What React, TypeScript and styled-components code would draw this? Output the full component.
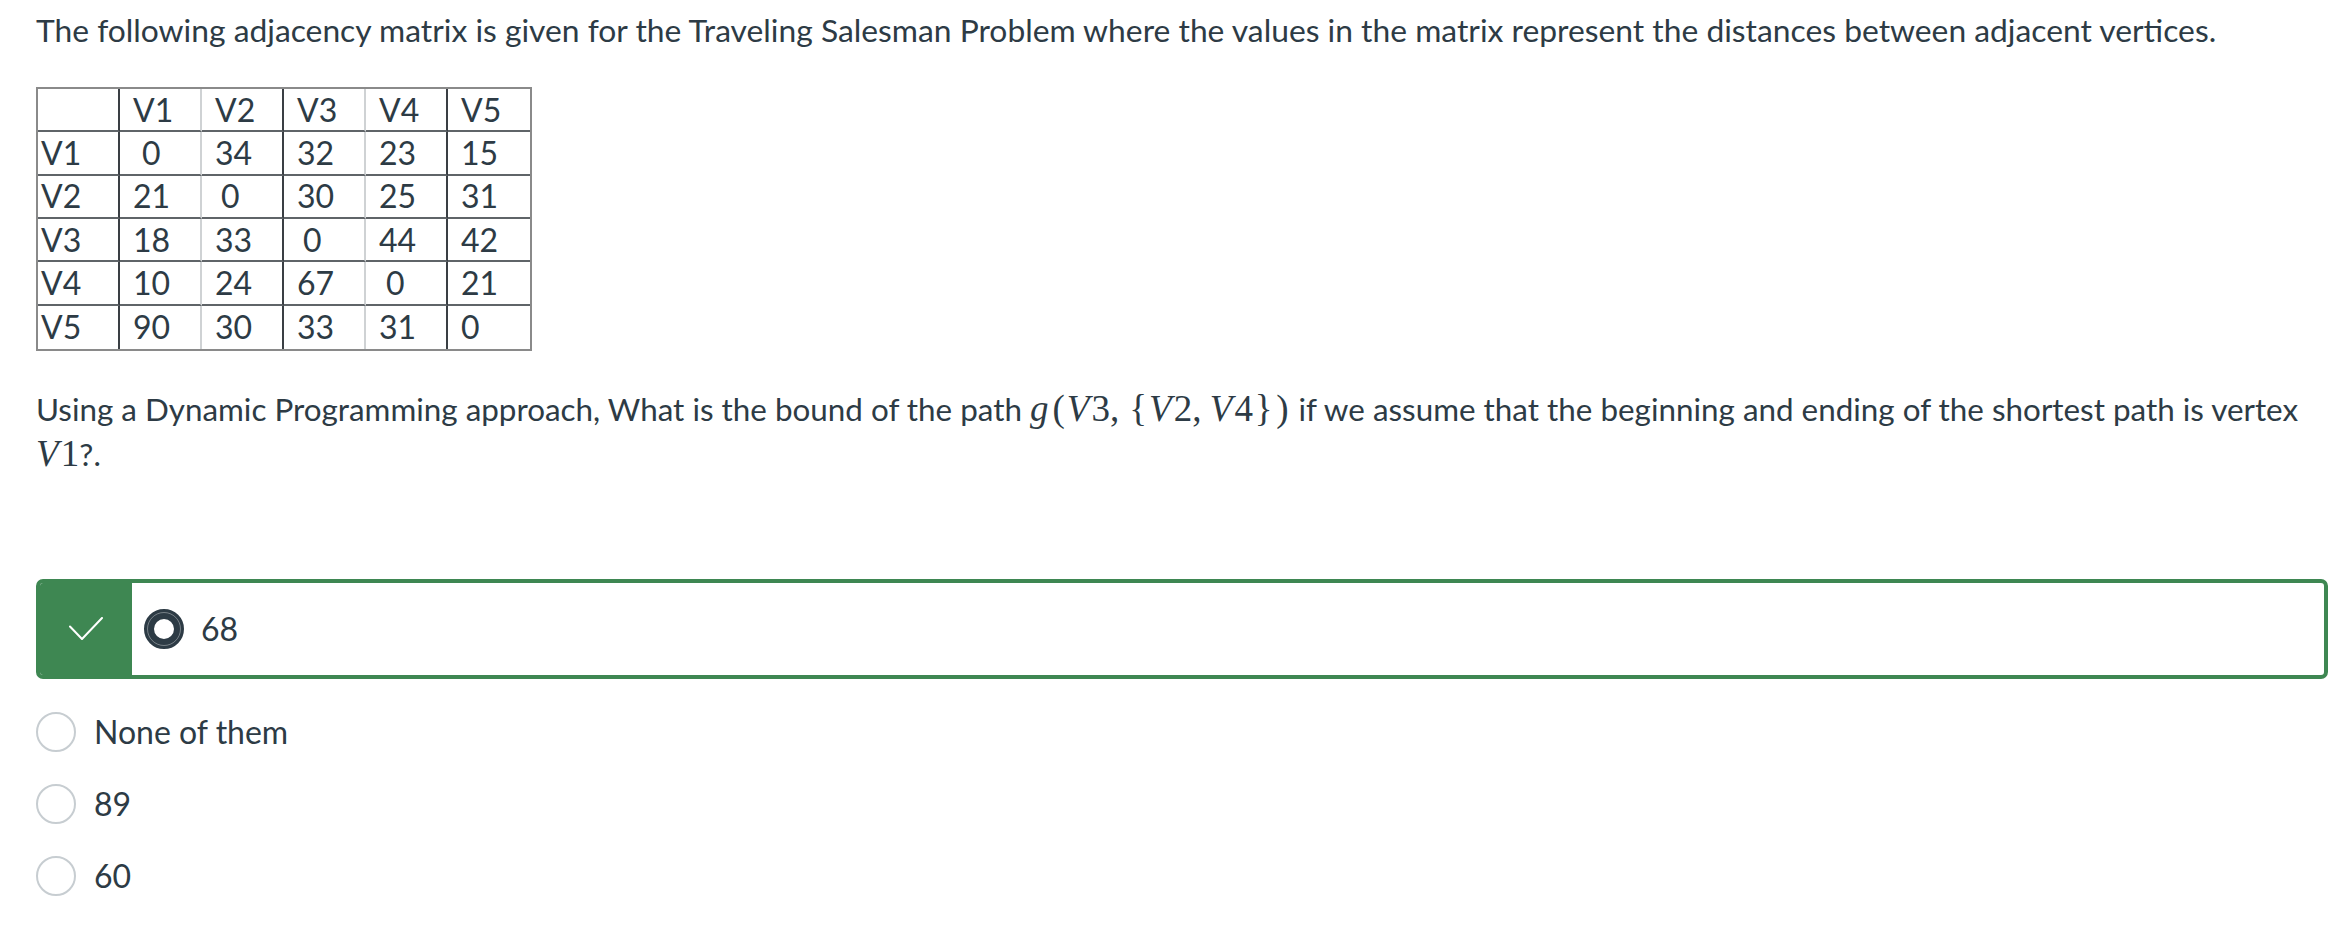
import React from "react";
import styled, { createGlobalStyle } from "styled-components";

const GlobalStyle = createGlobalStyle`
  html, body {
    margin: 0;
    padding: 0;
    background: #ffffff;
  }
  body {
    font-family: Lato, "Noto Sans", sans-serif;
    color: #2d3b45;
  }
`;

const Page = styled.div`
  box-sizing: border-box;
  width: 2352px;
  padding: 6px 24px 0 36px;
`;

const Prompt = styled.p`
  margin: 0 0 33px;
  font-size: 31.8px;
  line-height: 48px;
`;

const Matrix = styled.table`
  border-collapse: separate;
  border-spacing: 0;
  border: 2px solid #8a8a8a;
  font-size: 32px;
  color: #2d3b45;
`;

type Edge = "dark" | "light" | "none";

const edgeColor = (e: Edge) =>
  e === "dark" ? "#3a3f44" : e === "light" ? "#cfd2d4" : "transparent";

const Cell = styled.td<{ $label?: boolean; $right: Edge; $last?: boolean; $indent?: number }>`
  box-sizing: border-box;
  width: 82px;
  min-width: 82px;
  height: 43.33px;
  padding: 0 0 0 ${(p) => (p.$label ? 3 : 13 + (p.$indent || 0))}px;
  line-height: 40px;
  text-align: left;
  vertical-align: middle;
  white-space: nowrap;
  border-right: 2px solid ${(p) => edgeColor(p.$right)};
  border-bottom: 2px solid ${(p) => (p.$last ? "transparent" : "#5f6468")};
  ${(p) => (p.$right === "none" ? "border-right: none;" : "")}
  ${(p) => (p.$last ? "border-bottom: none;" : "")}
`;

const Question = styled.p`
  margin: 36px 0 0;
  font-size: 31.4px;
  line-height: 45px;
`;

const MathExpr = styled.span`
  font-family: "Liberation Serif", "DejaVu Serif", serif;
  font-size: 37px;
  line-height: 1;
  white-space: nowrap;
  color: #2d3b45;
`;

const MathVar = styled.i`
  font-style: italic;
  margin-right: 0.06em;
`;

const Thin = styled.span`
  display: inline-block;
  width: 0.22em;
`;

const Fence = styled.span`
  margin: 0 0.05em;
`;

const Answers = styled.div`
  display: flex;
  flex-direction: column;
  margin-top: 102px;
`;

const CorrectAnswer = styled.div`
  box-sizing: border-box;
  display: flex;
  align-items: stretch;
  height: 100px;
  border: 4px solid #3e8752;
  border-radius: 7px;
  overflow: hidden;
  margin-bottom: 17px;
`;

const Flag = styled.div`
  width: 92px;
  flex: none;
  background: #3e8752;
  display: flex;
  align-items: center;
  justify-content: center;
`;

const OptionRow = styled.label<{ $inBox?: boolean }>`
  display: flex;
  align-items: center;
  gap: ${(p) => (p.$inBox ? 17 : 18)}px;
  height: ${(p) => (p.$inBox ? "auto" : "72px")};
  padding-left: ${(p) => (p.$inBox ? 12 : 0)}px;
  font-size: 32px;
  color: #2d3b45;
`;

const Radio = styled.span<{ $checked?: boolean }>`
  box-sizing: border-box;
  flex: none;
  width: 40px;
  height: 40px;
  border-radius: 50%;
  background: #ffffff;
  border: ${(p) => (p.$checked ? "10px solid #2d3b45" : "2px solid #c7cdd1")};
  ${(p) =>
    p.$checked
      ? "outline: 1px solid rgba(255,255,255,0.35); outline-offset: -4px;"
      : ""}
`;

const matrix: { label: string; values: { v: string; indent?: number }[] }[] = [
  { label: "V1", values: [{ v: "0", indent: 9 }, { v: "34" }, { v: "32" }, { v: "23" }, { v: "15" }] },
  { label: "V2", values: [{ v: "21" }, { v: "0", indent: 6 }, { v: "30" }, { v: "25" }, { v: "31" }] },
  { label: "V3", values: [{ v: "18" }, { v: "33" }, { v: "0", indent: 6 }, { v: "44" }, { v: "42" }] },
  { label: "V4", values: [{ v: "10" }, { v: "24" }, { v: "67" }, { v: "0", indent: 7 }, { v: "21" }] },
  { label: "V5", values: [{ v: "90" }, { v: "30" }, { v: "33" }, { v: "31" }, { v: "0" }] },
];

const edges: Edge[] = ["dark", "light", "dark", "light", "dark", "none"];

const Check = () => (
  <svg width="34" height="23" viewBox="0 0 34 23" fill="none">
    <polyline
      points="1,9.5 13,22 33,1"
      stroke="#ffffff"
      strokeWidth="2"
      strokeLinecap="round"
      strokeLinejoin="round"
    />
  </svg>
);

export default function App() {
  return (
    <>
      <GlobalStyle />
      <Page>
        <Prompt>
          The following adjacency matrix is given for the Traveling Salesman Problem where the
          values in the matrix represent the distances between adjacent vertices.
        </Prompt>
        <Matrix>
          <tbody>
            <tr>
              <Cell $label $right={edges[0]} />
              {["V1", "V2", "V3", "V4", "V5"].map((h, i) => (
                <Cell key={h} $right={edges[i + 1]}>
                  {h}
                </Cell>
              ))}
            </tr>
            {matrix.map((row, r) => (
              <tr key={row.label}>
                <Cell $label $right={edges[0]} $last={r === matrix.length - 1}>
                  {row.label}
                </Cell>
                {row.values.map((c, i) => (
                  <Cell
                    key={i}
                    $right={edges[i + 1]}
                    $last={r === matrix.length - 1}
                    $indent={c.indent}
                  >
                    {c.v}
                  </Cell>
                ))}
              </tr>
            ))}
          </tbody>
        </Matrix>
        <Question>
          Using a Dynamic Programming approach, What is the bound of the path{" "}
          <MathExpr>
            <MathVar>g</MathVar>
            <Fence>(</Fence>
            <MathVar>V</MathVar>3,<Thin />
            <Fence>{"{"}</Fence>
            <MathVar>V</MathVar>2,<Thin />
            <MathVar>V</MathVar>4<Fence>{"}"}</Fence>
            <Fence>)</Fence>
          </MathExpr>{" "}
          if we assume that the beginning and ending of the shortest path is vertex{" "}
          <MathExpr>
            <MathVar>V</MathVar>1
          </MathExpr>
          ?.
        </Question>
        <Answers>
          <CorrectAnswer>
            <Flag>
              <Check />
            </Flag>
            <OptionRow $inBox>
              <Radio $checked />
              68
            </OptionRow>
          </CorrectAnswer>
          <OptionRow>
            <Radio />
            None of them
          </OptionRow>
          <OptionRow>
            <Radio />
            89
          </OptionRow>
          <OptionRow>
            <Radio />
            60
          </OptionRow>
        </Answers>
      </Page>
    </>
  );
}
